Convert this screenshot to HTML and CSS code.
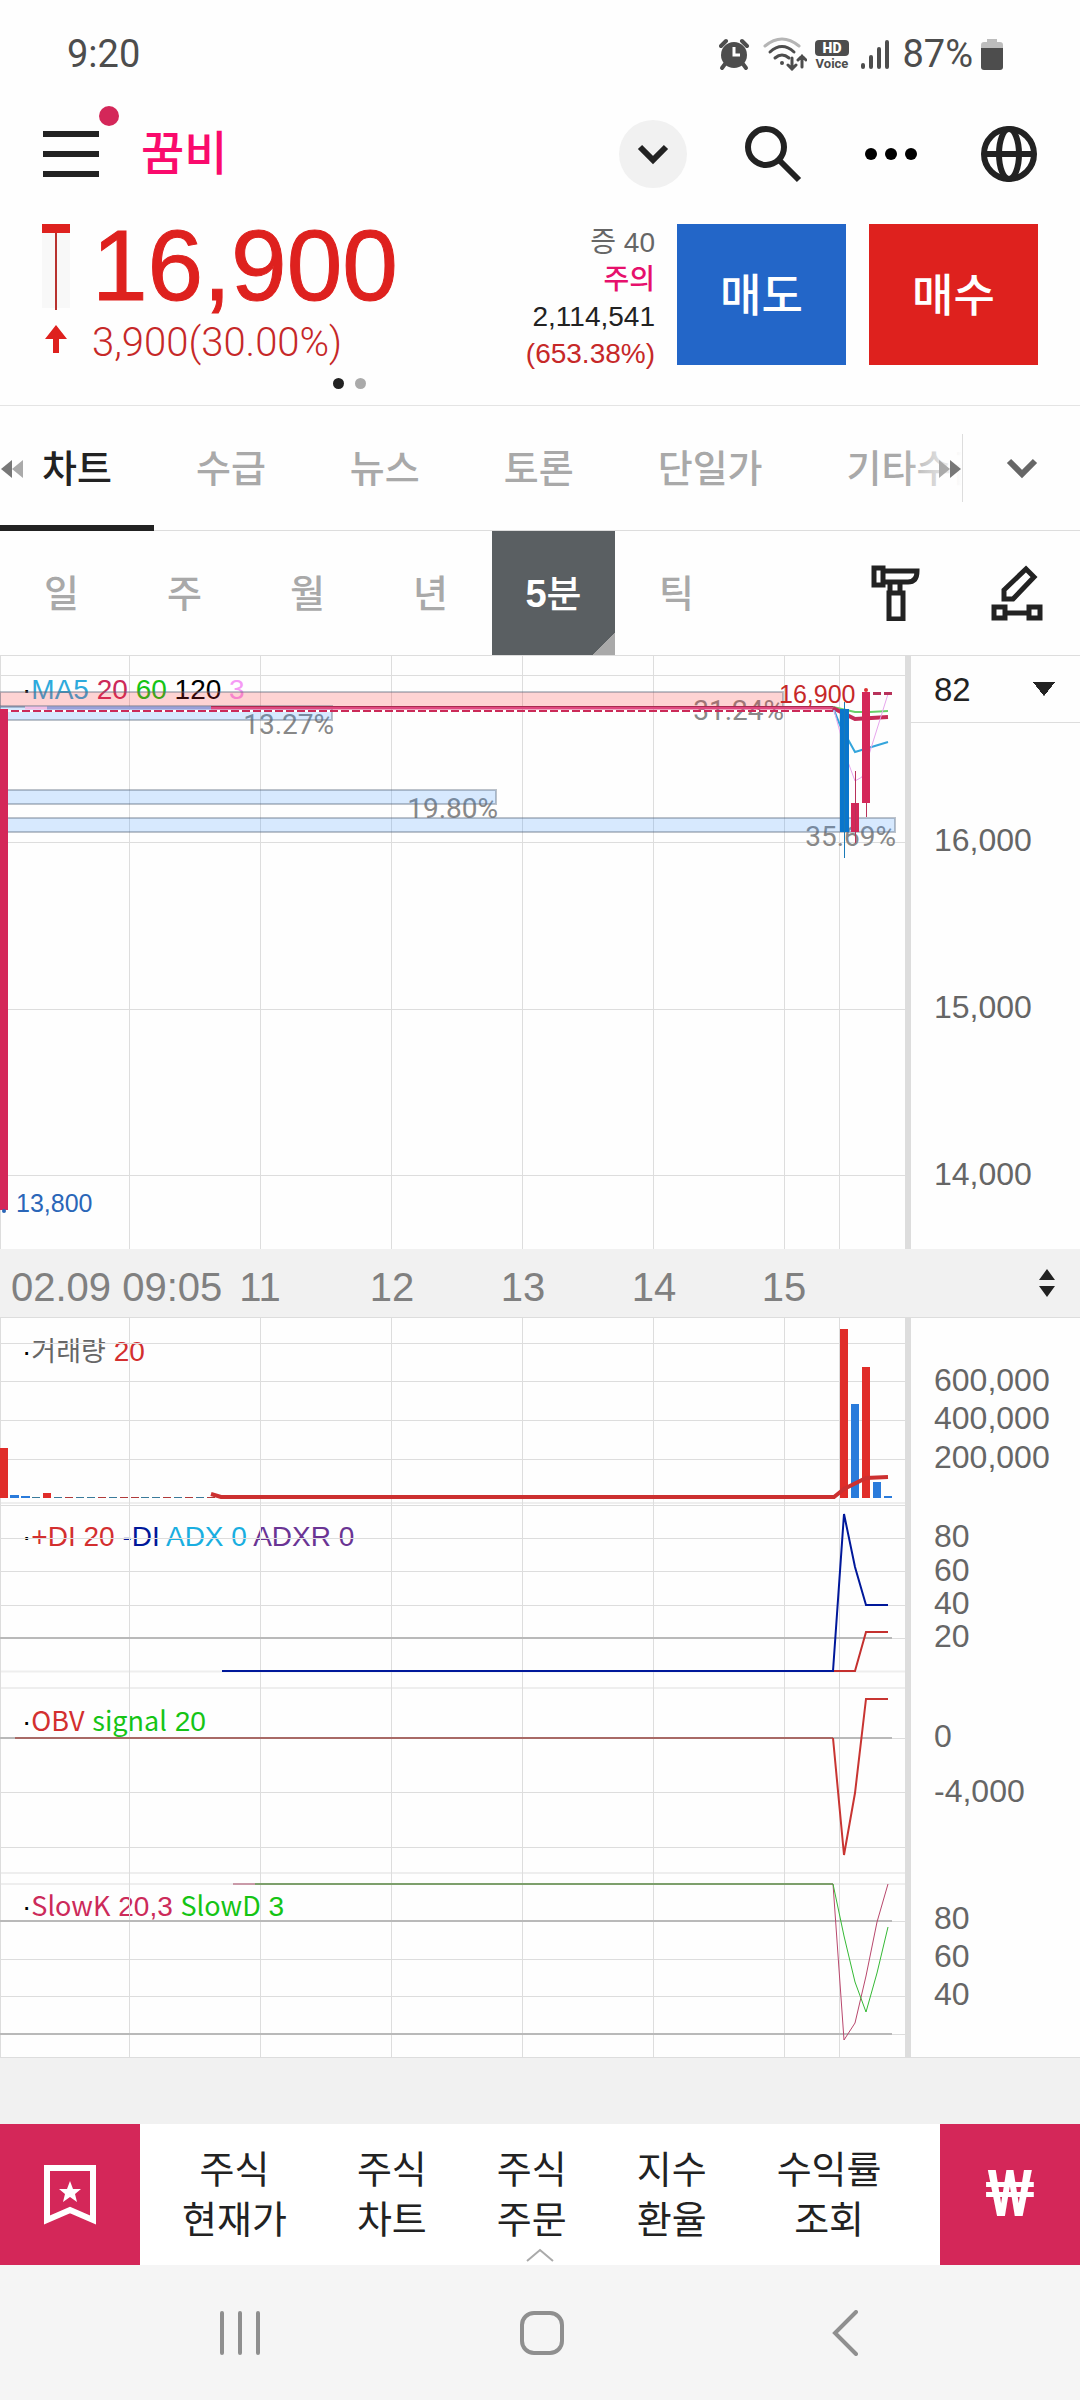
FILE: index.html
```html
<!DOCTYPE html>
<html lang="ko">
<head>
    <meta charset="UTF-8">
    <meta name="viewport" content="width=device-width, initial-scale=1.0">
    <title>꿈비 차트</title>
    <link rel="stylesheet" href="styles.css">
</head>
<body>

    <!-- Phone status bar -->
    <div class="status-bar">
        <span class="status-time">9:20</span>
        <div class="status-icons">
            <svg width="36" height="34" viewBox="0 0 36 34">
                <circle cx="15" cy="18" r="13" fill="#4d4d4d"/>
                <path d="M2 9L7 4M28 9L23 4" stroke="#4d4d4d" stroke-width="4" stroke-linecap="round"/>
                <path d="M6 27L3 31M24 27L27 31" stroke="#4d4d4d" stroke-width="4" stroke-linecap="round"/>
                <path d="M15 10V18H21" stroke="#fff" stroke-width="3" fill="none"/>
            </svg>
            <svg width="44" height="34" viewBox="0 0 44 34" fill="none" stroke-linecap="round">
                <path d="M2 9Q19 -5 36 9" stroke="#b5b5b5" stroke-width="3"/>
                <path d="M7 15Q19 4 31 15M12 21Q19 15 26 21" stroke="#4d4d4d" stroke-width="3"/>
                <circle cx="19" cy="26" r="2" fill="#4d4d4d"/>
                <path d="M29 21V32M25 28L29 32L33 28M39 30V19M35 23L39 19L43 23" stroke="#4d4d4d" stroke-width="3"/>
            </svg>
            <svg width="34" height="34" viewBox="0 0 34 34">
                <rect x="0" y="3" width="34" height="16" rx="4" fill="#4d4d4d"/>
                <text x="17" y="16" text-anchor="middle" class="hd-text">HD</text>
                <text x="17" y="31" text-anchor="middle" class="voice-text">Voice</text>
            </svg>
            <svg width="37" height="34" viewBox="0 0 37 34" stroke="#4d4d4d" stroke-width="4" stroke-linecap="round">
                <path d="M6 28V30M14 20V30M22 12V30M30 5V30"/>
            </svg>
            <span>87%</span>
            <svg width="22" height="34" viewBox="0 0 22 34">
                <path d="M6 2h10v3h3a3 3 0 0 1 3 3v6H0V8a3 3 0 0 1 3-3h3z" fill="#bdbdbd"/>
                <path d="M0 11h22v19a3 3 0 0 1-3 3H3a3 3 0 0 1-3-3z" fill="#4d4d4d"/>
            </svg>
        </div>
    </div>

    <!-- App header -->
    <header class="app-header">
        <button class="menu-btn" aria-label="메뉴">
            <svg width="56" height="46" viewBox="0 0 56 46"><path d="M0 3H56M0 23H56M0 43H56" stroke="#222" stroke-width="6"/></svg>
            <span class="menu-dot"></span>
        </button>
        <h1>꿈비</h1>
        <div class="header-actions">
            <button class="circle-btn" aria-label="종목 선택">
                <svg width="32" height="22" viewBox="0 0 32 22"><path d="M3 4L16 17L29 4" fill="none" stroke="#222" stroke-width="6"/></svg>
            </button>
            <button aria-label="검색">
                <svg width="58" height="58" viewBox="0 0 58 58" fill="none" stroke="#222" stroke-width="6"><circle cx="21" cy="22" r="18"/><path d="M34 35L54 55"/></svg>
            </button>
            <button aria-label="더보기">
                <svg width="62" height="14" viewBox="0 0 62 14"><circle cx="10" cy="7" r="6"/><circle cx="30" cy="7" r="6"/><circle cx="50" cy="7" r="6"/></svg>
            </button>
            <button aria-label="글로벌">
                <svg width="56" height="58" viewBox="0 0 56 58" fill="none" stroke="#222" stroke-width="6"><circle cx="28" cy="29" r="25"/><ellipse cx="28" cy="29" rx="10" ry="25"/><path d="M3 29H53"/></svg>
            </button>
        </div>
    </header>

    <!-- Current price -->
    <section class="quote">
        <div class="quote-marks">
            <svg width="28" height="86" viewBox="0 0 28 86"><path d="M0 0H28V84H0z" fill="#f8f8f8"/><path d="M0 0H28V9H0z" fill="#de211e"/><path d="M14 9V86" stroke="#b8322f" stroke-width="2"/></svg>
            <svg width="22" height="28" viewBox="0 0 22 28"><path d="M11 0L22 14H14V28H8V14H0z" fill="#de211e"/></svg>
        </div>
        <div class="quote-price">
            <strong>16,900</strong>
            <span>3,900(30.00%)</span>
        </div>
        <div class="quote-info">
            <span class="grey">증 40</span>
            <span class="pink">주의</span>
            <span>2,114,541</span>
            <span class="red">(653.38%)</span>
        </div>
        <button class="trade-btn sell">매도</button>
        <button class="trade-btn buy">매수</button>
        <div class="pager"><i class="on"></i><i></i></div>
    </section>

    <!-- Page tabs -->
    <nav class="tabs">
        <div class="tab-list">
            <button class="tab active">차트</button>
            <button class="tab">수급</button>
            <button class="tab">뉴스</button>
            <button class="tab">토론</button>
            <button class="tab">단일가</button>
            <button class="tab">기타수급</button>
            <svg class="scroll-mark left" width="24" height="18" viewBox="0 0 24 18"><path d="M12 0V18L1 9z" fill="#777"/><path d="M23 0V18L12 9z" fill="#aaa"/></svg>
            <svg class="scroll-mark right" width="24" height="18" viewBox="0 0 24 18"><path d="M1 0V18L12 9z" fill="#aaa"/><path d="M12 0V18L23 9z" fill="#777"/></svg>
        </div>
        <button class="tab-more" aria-label="전체 탭">
            <svg width="32" height="22" viewBox="0 0 32 22"><path d="M3 4L16 17L29 4" fill="none" stroke="#666" stroke-width="6"/></svg>
        </button>
    </nav>

    <!-- Chart period -->
    <div class="periods">
        <button>일</button>
        <button>주</button>
        <button>월</button>
        <button>년</button>
        <button class="active"><b>5</b>분</button>
        <button>틱</button>
        <div class="chart-tools">
            <button aria-label="차트 설정">
                <svg width="50" height="56" viewBox="0 0 50 56" fill="none" stroke="#222" stroke-width="5"><path d="M3 3H12V20H3zM14 6H46Q46 17 37 17H14M19 19V28M29 19V28M18 28H32V54H18z"/></svg>
            </button>
            <button aria-label="그리기">
                <svg width="52" height="56" viewBox="0 0 52 56" fill="none" stroke="#222" stroke-width="5"><path d="M13 34V25L35 4L43 12L22 34zM3 42H14V53H3zM38 42H49V53H38zM14 48H38"/></svg>
            </button>
        </div>
    </div>

    <!-- Price chart -->
    <section class="chart-row">
        <svg class="plot" viewBox="0 656 905 593">
            <path class="grid" d="M0 675.5H905M0 842.5H905M0 1009.5H905M0 1175.5H905"/>
            <path class="grid" d="M.5 656V1249M129.5 656V1249M260.5 656V1249M391.5 656V1249M522.5 656V1249M653.5 656V1249M784.5 656V1249M839.5 656V1249"/>
            <text class="legend" x="22" y="699">·<tspan class="c-sky">MA5</tspan> <tspan class="c-crimson">20</tspan> <tspan class="c-green">60</tspan> <tspan>120</tspan> <tspan class="c-violet">3</tspan></text>
            <text class="ratio" x="334" y="734">13.27%</text>
            <text class="ratio" x="498" y="818">19.80%</text>
            <text class="ratio" x="784" y="720">31.24%</text>
            <text class="ratio" x="896" y="846">35.69%</text>

            <!-- volume by price -->
            <rect class="zone hot" x="0" y="692" width="783" height="15"/>
            <rect class="zone" x="0" y="706" width="332" height="14"/>
            <rect class="zone" x="0" y="790" width="496" height="14"/>
            <rect class="zone" x="0" y="818" width="895" height="14"/>

            <!-- moving averages -->
            <path d="M25 708H47" stroke="#f3bfe6" stroke-width="3"/>
            <path d="M47 708H211" stroke="#9a9fd8" stroke-width="3"/>
            <path d="M211 708H834" stroke="#e0487f" stroke-width="3"/>
            <path d="M211 706.5H834" stroke="#a82a50"/>
            <path d="M8 711H834" stroke="#fff" stroke-width="2"/>
            <path d="M0 711H834" stroke="#cb2a58" stroke-width="2" stroke-dasharray="8 3"/>
            <path d="M833 707L855 712H870L888 711" class="line" stroke="#6ad06a" stroke-width="2"/>
            <path d="M833 708L855 719L888 717" class="line" stroke="#c42c58" stroke-width="4"/>
            <path d="M834 710L840 725L855 752L888 742" class="line" stroke="#34a5dc" stroke-width="2"/>
            <path d="M834 710L848 762L855 781L862 777L888 694" class="line" stroke="#e6a6ec"/>

            <!-- candles -->
            <path d="M0 709H8V1210H0zM851 803H859V832H851zM862 692H870V803H862z" fill="#d42759"/>
            <path d="M840 709H849V832H840z" fill="#0a76cc"/>
            <path d="M844.5 702V858" stroke="#1a7ab8"/>
            <path d="M855.5 771V843M866.5 803V817" stroke="#b8325a"/>
            <circle cx="866" cy="690" r="2" fill="#d33"/>
            <circle cx="4" cy="1211" r="2" fill="#2a66b8"/>
            <path d="M873 693.5H892" stroke="#b8325a" stroke-width="3" stroke-dasharray="8 3"/>
            <text class="peak" x="779" y="703" fill="#c62828">16,900</text>
            <text class="peak" x="16" y="1212" fill="#2a66b8">13,800</text>
        </svg>
        <div class="axis">
            <select class="count" aria-label="봉 개수">
                <option>82</option>
            </select>
            <svg class="scale" viewBox="911 723 169 526">
                <text x="934" y="851">16,000</text>
                <text x="934" y="1018">15,000</text>
                <text x="934" y="1185">14,000</text>
            </svg>
        </div>
    </section>

    <!-- Time axis -->
    <div class="time-row">
        <svg class="times" viewBox="0 1249 905 68">
            <text x="11" y="1301">02.09 09:05</text>
            <text class="mid" x="260" y="1301">11</text>
            <text class="mid" x="392" y="1301">12</text>
            <text class="mid" x="523" y="1301">13</text>
            <text class="mid" x="654" y="1301">14</text>
            <text class="mid" x="784" y="1301">15</text>
        </svg>
        <button class="sort-btn" aria-label="높이 조절">
            <svg width="16" height="28" viewBox="0 0 16 28"><path d="M8 0L16 11H0zM8 28L0 17H16z" fill="#222"/></svg>
        </button>
    </div>

    <!-- Indicators: volume, DMI, OBV, stochastic -->
    <section class="chart-row indicators">
        <svg class="plot" viewBox="0 1318 905 739">
            <text class="legend" x="22" y="1361">·<tspan class="ko c-grey">거래량</tspan> <tspan class="c-red">20</tspan></text>
            <text class="legend" x="22" y="1546">·<tspan class="c-red">+DI 20</tspan> <tspan class="c-navy">-DI</tspan> <tspan class="c-cyan">ADX 0</tspan> <tspan class="c-purple">ADXR 0</tspan></text>
            <text class="legend" x="22" y="1731">·<tspan class="ko c-red">OBV</tspan> <tspan class="ko c-green">signal</tspan> <tspan class="c-green">20</tspan></text>
            <text class="legend" x="22" y="1916">·<tspan class="ko c-crimson">SlowK</tspan> <tspan class="c-crimson">20,3</tspan> <tspan class="ko c-green">SlowD</tspan> <tspan class="c-green">3</tspan></text>

            <path class="grid" d="M0 1343.5H905M0 1381.5H905M0 1420.5H905M0 1459.5H905M0 1505.5H905M0 1538.5H905M0 1571.5H905M0 1605.5H905M0 1638.5H905M0 1738.5H905M0 1792.5H905M0 1847.5H905M0 1921.5H905M0 1959.5H905M0 1996.5H905M0 2034.5H905"/>
            <path d="M0 1503H905M0 1671.5H905M0 1688H905M0 1873H905M0 1884H905" stroke="#eee" stroke-width="2"/>
            <path class="grid" d="M.5 1318V2057M129.5 1318V2057M260.5 1318V2057M391.5 1318V2057M522.5 1318V2057M653.5 1318V2057M784.5 1318V2057M839.5 1318V2057"/>
            <path d="M0 1638H892M0 1738H892M0 1921H892M0 2034H892" stroke="#b9b9b9" stroke-width="2"/>

            <!-- volume -->
            <path d="M0 1448H8V1498H0zM43 1493H51V1498H43zM840 1329H848V1498H840zM862 1367H870V1498H862z" fill="#e02d29"/>
            <path d="M10 1495H19V1498H10zM21 1496H30V1498H21zM851 1404H859V1498H851zM873 1482H881V1498H873zM884 1496H892V1498H884z" fill="#2a7bdb"/>
            <path d="M65 1497.5h8M98 1497.5h8M120 1497.5h8M131 1497.5h8M163 1497.5h8M185 1497.5h8M207 1497.5h8" stroke="#b03a3a"/>
            <path d="M32 1497.5h8M54 1497.5h8M76 1497.5h8M87 1497.5h8M109 1497.5h8M141 1497.5h8M152 1497.5h8M174 1497.5h8M196 1497.5h8" stroke="#3a7a9a"/>
            <path class="line" d="M211 1494L221 1497H834L844 1489L866 1478L888 1477" stroke="#cc3030" stroke-width="4"/>

            <!-- DI -->
            <path class="line" d="M833 1671H855L866 1632H888" stroke="#c4302e" stroke-width="2"/>
            <path class="line" d="M222 1671H833L844 1514L855 1567L866 1605H888" stroke="#00189a" stroke-width="2"/>

            <!-- OBV -->
            <path class="line" d="M15 1738H833" stroke="#a86a66" stroke-width="2"/>
            <path class="line" d="M833 1738L844 1855L855 1793L866 1699H888" stroke="#c83532" stroke-width="2"/>

            <!-- SlowK / SlowD -->
            <path class="line" d="M233 1884H255" stroke="#c99aa8" stroke-width="2"/>
            <path class="line" d="M255 1884H833" stroke="#7da06c" stroke-width="2"/>
            <path class="line" d="M833 1884L844 2040L855 2023L866 1976L877 1922L888 1884" stroke="#b8476c"/>
            <path class="line" d="M833 1884L844 1936L855 1982L866 2012L877 1973L888 1927" stroke="#35b935"/>
        </svg>
        <div class="axis">
            <svg class="scale" viewBox="911 1318 169 739">
                <text x="934" y="1391">600,000</text>
                <text x="934" y="1429">400,000</text>
                <text x="934" y="1468">200,000</text>
                <text x="934" y="1547">80</text>
                <text x="934" y="1581">60</text>
                <text x="934" y="1614">40</text>
                <text x="934" y="1647">20</text>
                <text x="934" y="1747">0</text>
                <text x="934" y="1802">-4,000</text>
                <text x="934" y="1929">80</text>
                <text x="934" y="1967">60</text>
                <text x="934" y="2005">40</text>
            </svg>
        </div>
    </section>

    <!-- Quick menu -->
    <nav class="quick-menu">
        <button class="quick-side" aria-label="관심종목">
            <svg width="52" height="60" viewBox="0 0 52 60"><path d="M3 3H49V55L26 45L3 55z" fill="none" stroke="#fff" stroke-width="6"/><path d="M26 16L29 24H37L31 29L33 37L26 32L19 37L21 29L15 24H23z" fill="#fff"/></svg>
        </button>
        <div class="quick-links">
            <a href="#">주식<br>현재가</a>
            <a href="#">주식<br>차트</a>
            <a href="#">주식<br>주문</a>
            <a href="#">지수<br>환율</a>
            <a href="#">수익률<br>조회</a>
            <svg class="caret" width="28" height="14" viewBox="0 0 28 14"><path d="M1 13L14 2L27 13" fill="none" stroke="#aaa" stroke-width="2"/></svg>
        </div>
        <button class="quick-side won">₩</button>
    </nav>

    <!-- Android navigation -->
    <div class="system-nav">
        <button aria-label="최근 앱"><svg width="44" height="46" viewBox="0 0 44 46"><path d="M4 3V43M22 3V43M40 3V43" stroke="#8f8f8f" stroke-width="4" stroke-linecap="round"/></svg></button>
        <button aria-label="홈"><svg width="46" height="46" viewBox="0 0 46 46"><rect x="3" y="3" width="40" height="40" rx="12" fill="none" stroke="#8f8f8f" stroke-width="4"/></svg></button>
        <button aria-label="뒤로"><svg width="26" height="46" viewBox="0 0 26 46"><path d="M24 2L3 23L24 44" fill="none" stroke="#8f8f8f" stroke-width="4" stroke-linecap="round"/></svg></button>
    </div>

</body>
</html>
```

FILE: styles.css
```css
* {
    box-sizing: border-box;
}

body {
    margin: 0;
    background-color: #fefefe;
    color: #222;
    font-family: "Liberation Sans", "Noto Sans CJK KR", sans-serif;
}

button {
    padding: 0;
    border: none;
    background: none;
    color: inherit;
    font-family: inherit;
    cursor: pointer;
}

svg {
    display: block;
}

/* status bar */
.status-bar {
    display: flex;
    justify-content: space-between;
    align-items: center;
    height: 108px;
    padding: 0 77px 0 67px;
    color: #4d4d4d;
    font-family: Roboto, sans-serif;
    font-size: 38px;
}

.status-icons {
    display: flex;
    align-items: center;
    gap: 8px;
}

.hd-text {
    fill: #fff;
    font-size: 14px;
    font-weight: 900;
}

.voice-text {
    fill: #4d4d4d;
    font-size: 13px;
    font-weight: 700;
}

/* header */
.app-header {
    display: flex;
    align-items: center;
    height: 92px;
    padding: 0 43px;
}

.menu-btn {
    position: relative;
}

.menu-dot {
    position: absolute;
    top: -25px;
    right: -20px;
    width: 20px;
    height: 20px;
    border-radius: 50%;
    background-color: #d42759;
}

h1 {
    margin: 0 0 0 42px;
    color: #fa0a6c;
    font-size: 47px;
    font-weight: 500;
    line-height: 60px;
}

.header-actions {
    display: flex;
    align-items: center;
    gap: 58px;
    margin-left: auto;
}

.circle-btn {
    display: flex;
    justify-content: center;
    align-items: center;
    width: 68px;
    height: 68px;
    border-radius: 50%;
    background-color: #f1f1f1;
}

/* quote */
.quote {
    position: relative;
    display: flex;
    height: 206px;
    padding: 24px 42px 0;
    border-bottom: 1px solid #e4e4e4;
}

.quote-marks {
    display: flex;
    flex-direction: column;
    align-items: center;
    gap: 15px;
    width: 28px;
}

.quote-price {
    display: flex;
    flex-direction: column;
    margin-left: 22px;
    color: #de211e;
}

.quote-price strong {
    font-size: 100px;
    font-weight: 400;
    line-height: 82px;
    -webkit-text-stroke: 1px #de211e;
}

.quote-price span {
    color: #c62828;
    font-family: Roboto, sans-serif;
    font-size: 40px;
    font-weight: 300;
    line-height: 74px;
}

.quote-info {
    display: flex;
    flex-direction: column;
    margin: 0 22px 0 auto;
    font-size: 28px;
    line-height: 37px;
    text-align: right;
}

.grey {
    color: #666;
}

.pink {
    color: #e6106c;
    font-weight: 500;
}

.red {
    color: #c62828;
}

.trade-btn {
    width: 169px;
    height: 141px;
    padding-bottom: 4px;
    color: #fff;
    font-size: 45px;
    font-weight: 500;
}

.sell {
    background-color: #2366c8;
}

.buy {
    margin-left: 23px;
    background-color: #de211e;
}

.pager {
    position: absolute;
    bottom: 16px;
    left: 333px;
    display: flex;
    gap: 11px;
}

.pager i {
    width: 11px;
    height: 11px;
    border-radius: 50%;
    background-color: #aaa;
}

.pager .on {
    background-color: #222;
}

/* tabs */
.tabs {
    display: flex;
    align-items: center;
    height: 125px;
    border-bottom: 1px solid #ddd;
}

.tab-list {
    position: relative;
    display: flex;
    flex: 1;
    height: 125px;
    overflow: hidden;
}

.tab-list::after {
    content: "";
    position: absolute;
    top: 0;
    right: 0;
    width: 60px;
    height: 118px;
    background: linear-gradient(to right, rgba(255, 255, 255, 0), #fefefe);
}

.tab {
    flex: none;
    padding: 0 42px;
    border-bottom: 6px solid transparent;
    color: #a9a9a9;
    font-size: 38px;
    font-weight: 500;
}

.tab.active {
    border-color: #222;
    color: #222;
}

.scroll-mark {
    position: absolute;
    top: 54px;
    z-index: 1;
}

.scroll-mark.left {
    left: 0;
}

.scroll-mark.right {
    right: 0;
}

.tab-more {
    display: flex;
    justify-content: center;
    align-items: center;
    width: 118px;
    height: 68px;
    border-left: 1px solid #ddd;
}

/* periods */
.periods {
    display: flex;
    height: 125px;
    border-bottom: 1px solid #ddd;
}

.periods > button {
    width: 123px;
    padding-bottom: 6px;
    color: #a9a9a9;
    font-size: 38px;
    font-weight: 500;
}

.periods > .active {
    background: linear-gradient(135deg, transparent 0 calc(100% - 16px), #a9a9a9 calc(100% - 16px)) #5a5f62;
    color: #fff;
}

.chart-tools {
    display: flex;
    align-items: center;
    gap: 70px;
    margin-left: auto;
    padding-right: 37px;
}

/* charts */
.chart-row {
    display: grid;
    grid-template-columns: 905fr 175fr;
}

.plot,
.scale,
.times {
    width: 100%;
}

.axis {
    border-left: 6px solid #ddd;
}

.grid {
    stroke: #ddd;
    stroke-width: 1;
}

.line {
    fill: none;
}

.zone {
    fill: rgba(60, 150, 255, 0.2);
    stroke: rgba(90, 105, 125, 0.4);
    stroke-width: 2;
}

.zone.hot {
    fill: rgba(255, 40, 40, 0.2);
}

.legend {
    fill: #000;
    font-size: 28px;
}

.ko {
    font-family: "Noto Sans CJK KR", sans-serif;
    font-size: 27px;
}

.c-sky { fill: #2eaadc; }
.c-crimson { fill: #cc2a5a; }
.c-green { fill: #15c415; }
.c-violet { fill: #f59af5; }
.c-grey { fill: #666; }
.c-red { fill: #d32f2f; }
.c-navy { fill: #00189a; }
.c-cyan { fill: #19aee0; }
.c-purple { fill: #6a3494; }

.ratio {
    fill: #888;
    font-family: Roboto, sans-serif;
    font-size: 28px;
    text-anchor: end;
}

.peak {
    font-size: 25px;
}

.scale text {
    fill: #666;
    font-size: 32px;
}

.count {
    display: block;
    width: 100%;
    height: 67px;
    padding: 0 23px;
    border: none;
    border-bottom: 1px solid #ddd;
    border-radius: 0;
    appearance: none;
    background: linear-gradient(to bottom right, #222 50%, transparent 51%) 133px 26px / 11px 14px no-repeat,
        linear-gradient(to bottom left, #222 50%, transparent 51%) 122px 26px / 11px 14px no-repeat;
    color: #222;
    font-family: inherit;
    font-size: 33px;
}

.time-row {
    display: grid;
    grid-template-columns: 905fr 175fr;
    border-bottom: 1px solid #ddd;
    background-color: #f1f1f1;
}

.times text {
    fill: #808080;
    font-size: 40px;
}

.times .mid {
    text-anchor: middle;
}

.sort-btn {
    display: flex;
    justify-content: flex-end;
    align-items: center;
    padding-right: 25px;
}

.indicators {
    border-bottom: 1px solid #ddd;
}

/* quick menu */
.quick-menu {
    display: flex;
    height: 207px;
    border-top: 66px solid #f1f1f1;
    background-color: #fff;
}

.quick-side {
    display: flex;
    justify-content: center;
    align-items: center;
    width: 140px;
    background-color: #d42759;
}

.won {
    color: #fff;
    font-family: Roboto, sans-serif;
    font-size: 64px;
    font-weight: 500;
}

.quick-links {
    position: relative;
    display: flex;
    flex: 1;
    align-items: center;
    gap: 70px;
    padding-left: 42px;
}

.quick-links a {
    color: #222;
    font-size: 38px;
    line-height: 50px;
    text-align: center;
    text-decoration: none;
}

.caret {
    position: absolute;
    bottom: 3px;
    left: calc(50% - 14px);
}

/* system navigation */
.system-nav {
    display: grid;
    grid-template-columns: repeat(3, 1fr);
    height: 135px;
    padding: 0 84px 0 89px;
    background-color: #f5f5f5;
}

.system-nav button {
    display: flex;
    justify-content: center;
    align-items: center;
}
```
